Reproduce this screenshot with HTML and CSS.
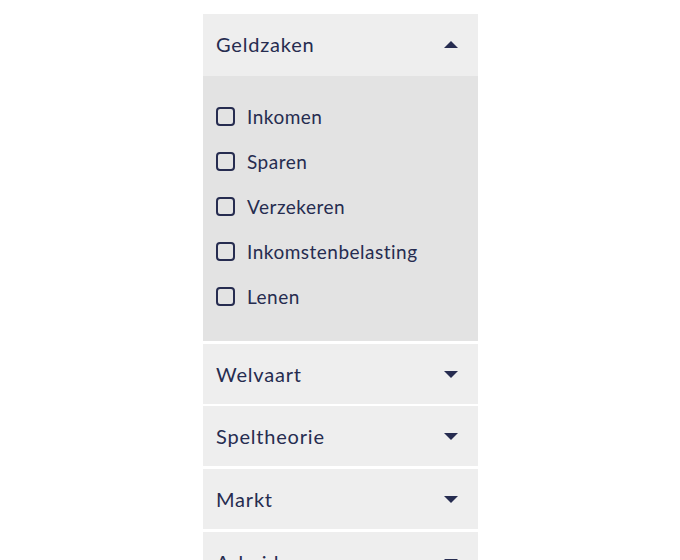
FILE: index.html
```html
<!DOCTYPE html>
<html lang="nl">
<head>
<meta charset="utf-8">
<link rel="stylesheet" href="styles.css">
</head>
<body>
<div class="accordion">
  <section class="item open">
    <div class="head"><span class="title">Geldzaken</span><span class="caret up"></span></div>
    <ul class="options">
      <li><span class="box"></span><span class="label">Inkomen</span></li>
      <li><span class="box"></span><span class="label">Sparen</span></li>
      <li><span class="box"></span><span class="label">Verzekeren</span></li>
      <li><span class="box"></span><span class="label">Inkomstenbelasting</span></li>
      <li><span class="box"></span><span class="label">Lenen</span></li>
    </ul>
  </section>
  <section class="item"><div class="head"><span class="title">Welvaart</span><span class="caret"></span></div></section>
  <section class="item"><div class="head"><span class="title">Speltheorie</span><span class="caret"></span></div></section>
  <section class="item"><div class="head"><span class="title">Markt</span><span class="caret"></span></div></section>
  <section class="item"><div class="head"><span class="title">Arbeid</span><span class="caret"></span></div></section>
</div>
</body>
</html>
```
FILE: styles.css
```css
html, body {
  margin: 0;
  padding: 0;
  background: #ffffff;
  height: 560px;
  overflow: hidden;
}
body {
  font-family: "Lato", "Open Sans", sans-serif;
  color: #262c50;
}
.accordion {
  width: 275px;
  margin: 14px 0 0 203px;
  display: flex;
  flex-direction: column;
  gap: 2.7px;
}
.head {
  height: 60px;
  background: #eeeeee;
  display: flex;
  align-items: center;
  justify-content: space-between;
  padding: 0 20px 0 13px;
  box-sizing: border-box;
}
.open .head {
  height: 62px;
  padding-bottom: 3px;
}
.title {
  font-size: 20px;
  letter-spacing: 0.8px;
}
.caret {
  width: 0;
  height: 0;
  border-left: 7px solid transparent;
  border-right: 7px solid transparent;
  border-top: 7px solid #262c50;
  margin-top: 1px;
}
.caret.up {
  border-top: 0;
  border-bottom: 7px solid #262c50;
  margin-top: 2px;
}
.options {
  list-style: none;
  margin: 0;
  padding: 18px 13px 22px;
  background: #e3e3e3;
}
.options li {
  height: 45px;
  display: flex;
  align-items: center;
  gap: 12px;
}
.box {
  width: 19px;
  height: 19px;
  box-sizing: border-box;
  border: 2px solid #262c50;
  border-radius: 4px;
  flex: none;
}
.label {
  font-size: 19px;
  letter-spacing: 0.5px;
}
```
